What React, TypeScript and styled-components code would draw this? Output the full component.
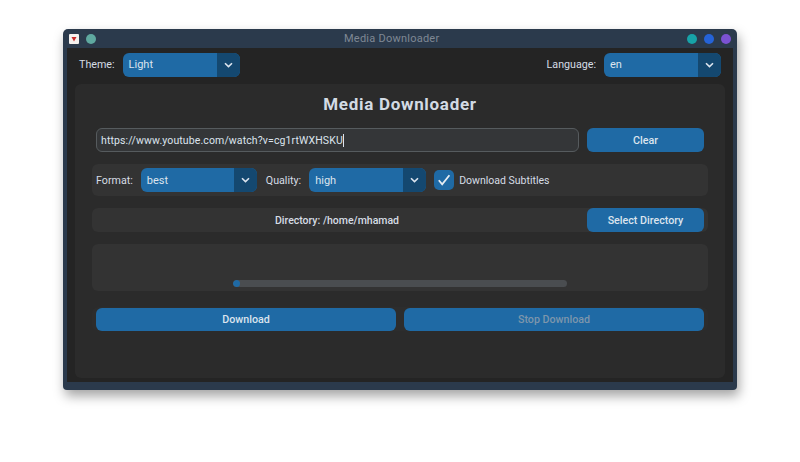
import styled, { createGlobalStyle } from "styled-components";

const GlobalStyle = createGlobalStyle`
  html, body {
    margin: 0;
    padding: 0;
    background: #fff;
    font-family: Roboto, "Liberation Sans", sans-serif;
  }
`;

const Page = styled.div`
  width: 800px;
  height: 462px;
  box-sizing: border-box;
  padding: 29px 63px 0;
  overflow: hidden;
`;

const Window = styled.div`
  width: 674px;
  height: 361px;
  border-radius: 5px 5px 4px 4px;
  background: #2b3a4c;
  box-shadow: 2px 6px 12px rgba(0, 0, 0, 0.36);
  display: flex;
  flex-direction: column;
  padding: 0 4px 8px;
  box-sizing: border-box;
`;

const TitleBar = styled.div`
  height: 19px;
  flex: none;
  display: grid;
  grid-template-columns: 275px auto 1fr;
  align-items: center;
  padding: 0 2px;
`;

const TitleGroup = styled.div<{ $end?: boolean }>`
  display: flex;
  align-items: center;
  gap: 7px;
  justify-content: ${(p) => (p.$end ? "flex-end" : "flex-start")};
`;

const AppIcon = styled.svg`
  width: 10px;
  height: 10px;
  display: block;
`;

const Dot = styled.span<{ $color: string }>`
  width: 10px;
  height: 10px;
  border-radius: 50%;
  background: ${(p) => p.$color};
`;

const TitleText = styled.div`
  color: #7f8894;
  font-size: 11px;
  letter-spacing: 0.24px;
`;

const Body = styled.div`
  flex: 1;
  min-height: 0;
  background: #242424;
  display: flex;
  flex-direction: column;
  padding: 5px 8px 4px;
`;

const TopBar = styled.div`
  height: 23px;
  flex: none;
  display: flex;
  align-items: center;
  justify-content: space-between;
  padding: 0 4px;
  margin-bottom: 8px;
`;

const LabelledSelect = styled.div`
  display: flex;
  align-items: center;
  gap: 8px;
`;

const Label = styled.span`
  color: #d6dde5;
  font-size: 10.7px;
  white-space: nowrap;
`;

const Select = styled.div<{ $width: number }>`
  width: ${(p) => p.$width}px;
  height: 24px;
  flex: none;
  display: flex;
  border-radius: 6px;
  overflow: hidden;
  background: #1f6aa5;
  color: #dce4ee;
  font-size: 11px;
`;

const SelectValue = styled.div`
  flex: 1;
  display: flex;
  align-items: center;
  padding-left: 6px;
`;

const SelectArrow = styled.div`
  width: 23px;
  display: flex;
  align-items: center;
  justify-content: center;
  background: #144870;
`;

const Panel = styled.div`
  flex: 1;
  min-height: 0;
  background: #2b2b2b;
  border-radius: 6px;
  display: flex;
  flex-direction: column;
  padding: 9px 17px 0;
`;

const Heading = styled.h1`
  margin: 0 0 12px;
  height: 23px;
  line-height: 23px;
  text-align: center;
  color: #d3dbe4;
  font-size: 17px;
  font-weight: 700;
  letter-spacing: 0.7px;
`;

const UrlRow = styled.div`
  display: flex;
  gap: 8px;
  padding: 0 4px;
  margin-bottom: 12px;
`;

const UrlInput = styled.div`
  flex: 1;
  height: 24px;
  box-sizing: border-box;
  display: flex;
  align-items: center;
  padding: 0 4px;
  border: 1px solid #565b5e;
  border-radius: 6px;
  background: #343638;
  color: #dce4ee;
  font-size: 10.5px;
  letter-spacing: 0.12px;
`;

const Caret = styled.span`
  width: 1px;
  height: 13px;
  background: #dce4ee;
`;

const Button = styled.div<{ $width?: number; $muted?: boolean }>`
  height: 24px;
  flex: ${(p) => (p.$width ? "none" : "1")};
  width: ${(p) => (p.$width ? `${p.$width}px` : "auto")};
  display: flex;
  align-items: center;
  justify-content: center;
  border-radius: 6px;
  background: #1f6aa5;
  color: ${(p) => (p.$muted ? "#7d96ac" : "#dce4ee")};
  font-size: 10.7px;
  font-weight: 500;
`;

const ActionButton = styled(Button)`
  height: 23px;
`;

const Band = styled.div<{ $height: number }>`
  height: ${(p) => p.$height}px;
  flex: none;
  box-sizing: border-box;
  background: #333333;
  border-radius: 6px;
  display: flex;
  align-items: center;
  margin-bottom: 12px;
  padding: 0 4px;
`;

const FieldLabel = styled(Label)`
  margin-right: 8px;
`;

const QualityLabel = styled(FieldLabel)`
  margin-left: 9px;
`;

const SubtitleLabel = styled(Label)`
  font-size: 10.5px;
`;

const CheckBox = styled.div`
  width: 20px;
  height: 20px;
  margin-left: 8px;
  margin-right: 5px;
  border-radius: 5px;
  background: #1f6aa5;
  display: flex;
  align-items: center;
  justify-content: center;
`;

const DirectoryLabel = styled.div`
  flex: 1;
  padding-right: 9px;
  text-align: center;
  color: #d6dde5;
  font-size: 10.5px;
  font-weight: 500;
`;

const ProgressBand = styled(Band)`
  align-items: flex-end;
  justify-content: center;
  padding-bottom: 4px;
  margin-bottom: 16px;
`;

const ProgressTrack = styled.div`
  width: 334px;
  height: 7px;
  border-radius: 4px;
  background: #4a4d50;
  overflow: hidden;
`;

const ProgressFill = styled.div`
  width: 7px;
  height: 100%;
  border-radius: 4px;
  background: #1f6aa5;
`;

const ActionRow = styled(Band)`
  gap: 8px;
  align-items: flex-end;
  background: #2d2d2d;
  margin-bottom: 0;
`;

const Chevron = () => (
  <svg width="9" height="6" viewBox="0 0 9 6" fill="none">
    <path d="M1 1.2 4.5 4.6 8 1.2" stroke="#dce4ee" strokeWidth="1.6" />
  </svg>
);

const Dropdown = ({ value, width }: { value: string; width: number }) => (
  <Select $width={width}>
    <SelectValue>{value}</SelectValue>
    <SelectArrow>
      <Chevron />
    </SelectArrow>
  </Select>
);

export default function App() {
  return (
    <Page>
      <GlobalStyle />
      <Window>
        <TitleBar>
          <TitleGroup>
            <AppIcon viewBox="0 0 10 10">
              <rect width="10" height="10" rx="1" fill="#f4f1ee" />
              <path d="M2.5 3h5L5 7.5z" fill="#c92a2a" />
            </AppIcon>
            <Dot $color="#5fa9a0" />
          </TitleGroup>
          <TitleText>Media Downloader</TitleText>
          <TitleGroup $end>
            <Dot $color="#17a3a8" />
            <Dot $color="#2563d8" />
            <Dot $color="#7b52d3" />
          </TitleGroup>
        </TitleBar>
        <Body>
          <TopBar>
            <LabelledSelect>
              <Label>Theme:</Label>
              <Dropdown value="Light" width={117} />
            </LabelledSelect>
            <LabelledSelect>
              <Label>Language:</Label>
              <Dropdown value="en" width={117} />
            </LabelledSelect>
          </TopBar>
          <Panel>
            <Heading>Media Downloader</Heading>
            <UrlRow>
              <UrlInput>
                https://www.youtube.com/watch?v=cg1rtWXHSKU
                <Caret />
              </UrlInput>
              <Button $width={117}>Clear</Button>
            </UrlRow>
            <Band $height={32}>
              <FieldLabel>Format:</FieldLabel>
              <Dropdown value="best" width={116} />
              <QualityLabel>Quality:</QualityLabel>
              <Dropdown value="high" width={117} />
              <CheckBox>
                <svg width="14" height="12" viewBox="0 0 14 12" fill="none">
                  <path d="M1.8 6.2 5.2 10.4 12.4 1.2" stroke="#e6edf3" strokeWidth="1.8" />
                </svg>
              </CheckBox>
              <SubtitleLabel>Download Subtitles</SubtitleLabel>
            </Band>
            <Band $height={24}>
              <DirectoryLabel>Directory: /home/mhamad</DirectoryLabel>
              <Button $width={117}>Select Directory</Button>
            </Band>
            <ProgressBand $height={47}>
              <ProgressTrack>
                <ProgressFill />
              </ProgressTrack>
            </ProgressBand>
            <ActionRow $height={24}>
              <ActionButton>Download</ActionButton>
              <ActionButton $muted>Stop Download</ActionButton>
            </ActionRow>
          </Panel>
        </Body>
      </Window>
    </Page>
  );
}
